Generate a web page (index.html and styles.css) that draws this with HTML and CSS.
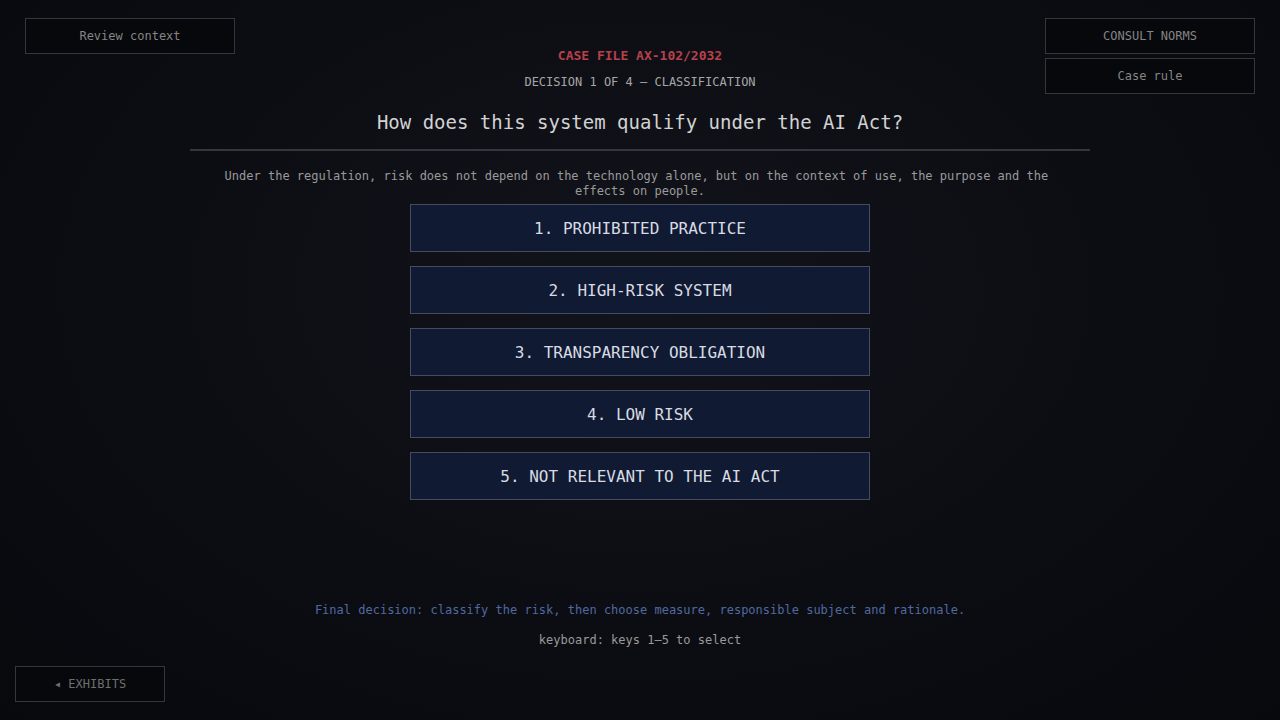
FILE: index.html
```html
<!DOCTYPE html>
<html lang="en">
<head>
<meta charset="utf-8">
<title>Case file AX-102/2032</title>
<link rel="stylesheet" href="styles.css">
</head>
<body>
<div class="screen">
  <button class="hud hud-left">Review context</button>
  <div class="hud-right">
    <button class="hud">CONSULT NORMS</button>
    <button class="hud">Case rule</button>
  </div>
  <main class="main">
    <div class="case">CASE FILE AX-102/2032</div>
    <div class="decision">DECISION 1 OF 4 — CLASSIFICATION</div>
    <h1 class="title">How does this system qualify under the AI Act?</h1>
    <div class="rule"></div>
    <p class="desc">Under the regulation, risk does not depend on the technology alone, but on the context of use, the purpose and the effects on people.</p>
    <div class="options">
      <button class="option">1. PROHIBITED PRACTICE</button>
      <button class="option">2. HIGH-RISK SYSTEM</button>
      <button class="option">3. TRANSPARENCY OBLIGATION</button>
      <button class="option">4. LOW RISK</button>
      <button class="option">5. NOT RELEVANT TO THE AI ACT</button>
    </div>
    <p class="final">Final decision: classify the risk, then choose measure, responsible subject and rationale.</p>
    <p class="keys">keyboard: keys 1–5 to select</p>
  </main>
  <button class="hud hud-bottom">◂ EXHIBITS</button>
</div>
</body>
</html>
```
FILE: styles.css
```css
* { box-sizing: border-box; }
html, body {
  margin: 0;
  padding: 0;
  width: 1280px;
  height: 720px;
  overflow: hidden;
}
body {
  background: #0a0b11;
  font-family: "DejaVu Sans Mono", "Liberation Mono", monospace;
}
.screen {
  position: relative;
  width: 1280px;
  height: 720px;
  background: radial-gradient(ellipse at 50% 40%, #12141b 0%, #0c0d13 55%, #08090d 100%);
}
.hud {
  font-family: "DejaVu Sans Mono", "Liberation Mono", monospace;
  font-size: 12px;
  color: #858585;
  background: #07080c;
  border: 1px solid #35363d;
  width: 210px;
  height: 36px;
  padding: 0;
  cursor: pointer;
}
.hud-left {
  position: absolute;
  left: 25px;
  top: 18px;
}
.hud-right {
  position: absolute;
  right: 25px;
  top: 18px;
  display: flex;
  flex-direction: column;
  gap: 4px;
}
.hud-bottom {
  position: absolute;
  left: 15px;
  bottom: 18px;
  width: 150px;
  color: #6e6e6e;
}
.main {
  width: 900px;
  margin: 0 auto;
  padding-top: 48px;
  display: flex;
  flex-direction: column;
  align-items: center;
  text-align: center;
}
.case {
  font-size: 13px;
  line-height: 16px;
  font-weight: bold;
  color: #b8404b;
}
.decision {
  margin-top: 10px;
  font-size: 12px;
  line-height: 16px;
  color: #a6a6a6;
}
.title {
  margin: 20px 0 0;
  font-size: 19px;
  line-height: 24px;
  font-weight: normal;
  color: #d2d2d2;
}
.rule {
  margin-top: 15px;
  width: 900px;
  height: 2px;
  background: #34363e;
}
.desc {
  margin: 18px 0 0;
  width: 840px;
  white-space: break-spaces;
  font-size: 12px;
  line-height: 15px;
  color: #9a9a9a;
}
.options {
  margin-top: 5px;
  display: flex;
  flex-direction: column;
  gap: 14px;
}
.option {
  width: 460px;
  height: 48px;
  padding: 0;
  background: #101a33;
  border: 1px solid #434c60;
  color: #d8dbe2;
  font-family: "DejaVu Sans Mono", "Liberation Mono", monospace;
  font-size: 16px;
  cursor: pointer;
}
.final {
  margin: 102px 0 0;
  font-size: 12px;
  line-height: 16px;
  color: #5069a0;
}
.keys {
  margin: 14px 0 0;
  font-size: 12px;
  line-height: 16px;
  color: #9a9a9a;
}
```
